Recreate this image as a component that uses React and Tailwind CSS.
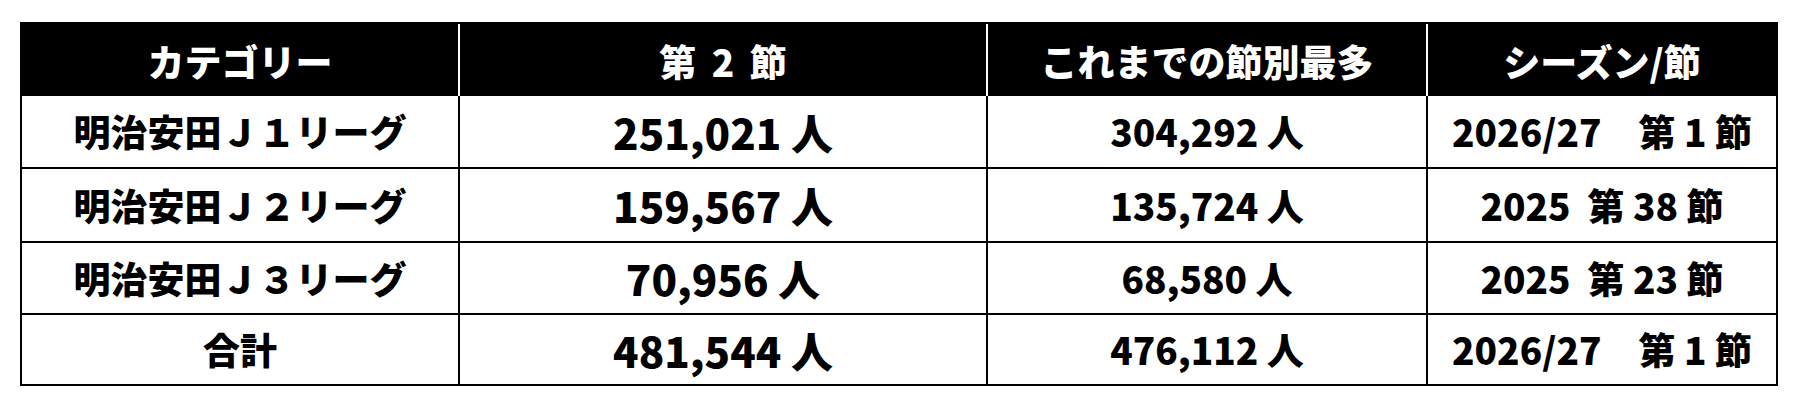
import React from "react";

const rows = [
  {
    cat: "明治安田Ｊ１リーグ",
    now: "251,021 人",
    best: "304,292 人",
    when: "2026/27　第 1 節",
    h: "h-[71px]",
  },
  {
    cat: "明治安田Ｊ２リーグ",
    now: "159,567 人",
    best: "135,724 人",
    when: "2025  第 38 節",
    h: "h-[72px]",
  },
  {
    cat: "明治安田Ｊ３リーグ",
    now: "70,956 人",
    best: "68,580 人",
    when: "2025  第 23 節",
    h: "h-[70px]",
  },
  {
    cat: "合計",
    now: "481,544 人",
    best: "476,112 人",
    when: "2026/27　第 1 節",
    h: "h-[69px]",
  },
];

const headers = [
  { t: "カテゴリー", c: "" },
  { t: "第 2 節", c: "[word-spacing:7px]" },
  { t: "これまでの節別最多", c: "" },
  { t: "シーズン/節", c: "" },
];

export default function App() {
  return (
    <div className="w-[1808px] h-[410px] bg-white font-['Noto_Sans_CJK_JP',sans-serif] font-black text-black">
      <div className="pt-[22px] pl-[20px]">
        <div className="w-[1758px] border-2 border-black">
          {/* header */}
          <div className="grid grid-cols-[436px_526px_438px_348px] gap-x-[2px] bg-white">
            {headers.map((h) => (
              <div
                key={h.t}
                className={`h-[72px] pt-[2px] bg-black text-white text-[37px] leading-none flex items-center justify-center ${h.c}`}
              >
                {h.t}
              </div>
            ))}
          </div>

          {/* body */}
          <div className="grid grid-cols-[436px_526px_438px_348px] gap-[2px] bg-black">
            {rows.map((r) => (
              <React.Fragment key={r.cat}>
                <div className={`${r.h} bg-white flex items-center justify-center text-[37px] leading-none`}>
                  {r.cat}
                </div>
                <div className={`${r.h} bg-white flex items-center justify-center text-[42px] leading-none`}>
                  {r.now}
                </div>
                <div className={`${r.h} bg-white flex items-center justify-center text-[37px] leading-none`}>
                  {r.best}
                </div>
                <div className={`${r.h} bg-white flex items-center justify-center text-[37px] leading-none whitespace-pre`}>
                  {r.when}
                </div>
              </React.Fragment>
            ))}
          </div>
        </div>
      </div>
    </div>
  );
}
